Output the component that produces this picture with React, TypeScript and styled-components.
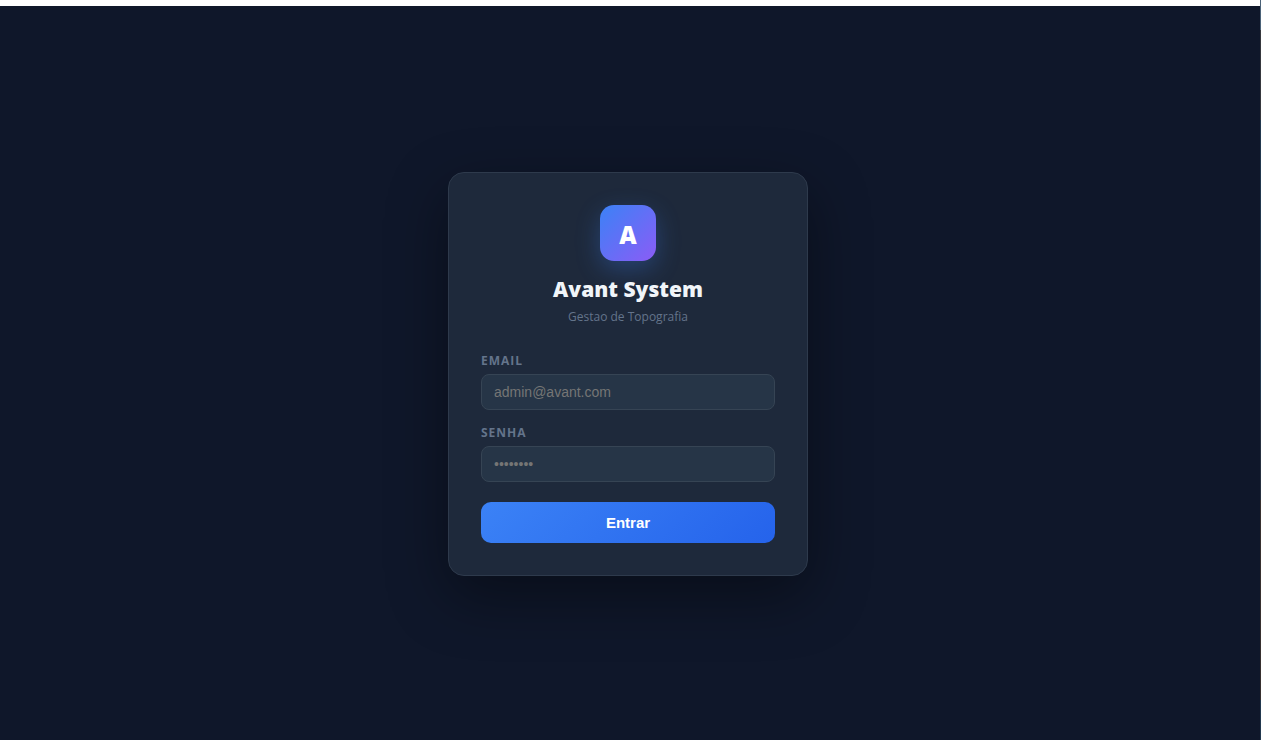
import React from "react";
import styled, { createGlobalStyle } from "styled-components";

const GlobalStyle = createGlobalStyle`
  *, *::before, *::after { box-sizing: border-box; }
  html, body { margin: 0; background: #0f172a; }
  body { font-family: "Segoe UI", "Open Sans", "Noto Sans", sans-serif; color: #f1f5f9; }
`;

const Page = styled.div`
  display: grid;
  grid-template: 6px 1fr / 1fr 1px;
  min-height: 100vh;
  background: #0f172a;
`;

const TopStrip = styled.div`
  background: #ffffff;
`;

const EdgeStrip = styled.div`
  grid-column: 2;
  grid-row: 1 / 3;
  background: linear-gradient(
    #4b6278 0 30px,
    #36383e 30px 120px,
    #22384e 120px 400px,
    #263040 400px 500px,
    #37302f 500px 700px,
    #22384e 700px
  );
`;

const Main = styled.main`
  display: flex;
  align-items: center;
  justify-content: center;
  padding: 2px 4px 0 0;
`;

const Card = styled.form`
  width: 100%;
  max-width: 360px;
  padding: 32px;
  background: #1e293b;
  border: 1px solid #2e3a4c;
  border-radius: 16px;
  box-shadow: 0 20px 60px rgba(0, 0, 0, 0.4);
`;

const Header = styled.header`
  display: flex;
  flex-direction: column;
  align-items: center;
  margin-bottom: 26px;
`;

const Logo = styled.div`
  display: flex;
  align-items: center;
  justify-content: center;
  width: 56px;
  height: 56px;
  margin-bottom: 12px;
  padding-top: 4px;
  border-radius: 14px;
  background: linear-gradient(135deg, #3b82f6, #8b5cf6);
  box-shadow: 0 8px 24px rgba(59, 130, 246, 0.3);
  color: #ffffff;
  font-size: 24px;
  font-weight: 800;
  line-height: 32px;
`;

const Title = styled.h1`
  margin: 0;
  font-size: 21px;
  font-weight: 800;
  line-height: 32px;
`;

const Subtitle = styled.p`
  margin: 3px 0 0;
  color: #64748b;
  font-size: 12px;
  line-height: 18px;
`;

const Field = styled.div<{ $gap: number }>`
  display: flex;
  flex-direction: column;
  gap: 4px;
  margin-bottom: ${({ $gap }) => $gap}px;
`;

const Label = styled.label`
  color: #64748b;
  font-size: 12px;
  font-weight: 700;
  letter-spacing: 1px;
  line-height: 18px;
  text-transform: uppercase;
`;

const Input = styled.input`
  width: 100%;
  height: 36px;
  padding: 0 12px;
  border: 1px solid #364454;
  border-radius: 8px;
  background: #263547;
  color: #f1f5f9;
  font-family: "Liberation Sans", Arial, sans-serif;
  font-size: 14px;
  outline: none;

  &::placeholder { color: #757575; opacity: 1; }
  &:focus { border-color: #3b82f6; }
`;

const SubmitButton = styled.button`
  width: 100%;
  padding: 12px;
  border: 0;
  border-radius: 10px;
  background: linear-gradient(135deg, #3b82f6, #2563eb);
  color: #ffffff;
  font-family: "Liberation Sans", Arial, sans-serif;
  font-size: 15px;
  font-weight: 700;
  line-height: 17px;
  cursor: pointer;
`;

export default function App() {
  return (
    <>
      <GlobalStyle />
      <Page>
        <TopStrip />
        <EdgeStrip />
        <Main>
          <Card onSubmit={(event: React.FormEvent) => event.preventDefault()}>
            <Header>
              <Logo>A</Logo>
              <Title>Avant System</Title>
              <Subtitle>Gestao de Topografia</Subtitle>
            </Header>
            <Field $gap={14}>
              <Label htmlFor="email">Email</Label>
              <Input id="email" type="email" placeholder="admin@avant.com" />
            </Field>
            <Field $gap={20}>
              <Label htmlFor="senha">Senha</Label>
              <Input id="senha" type="password" placeholder="••••••••" />
            </Field>
            <SubmitButton type="submit">Entrar</SubmitButton>
          </Card>
        </Main>
      </Page>
    </>
  );
}
